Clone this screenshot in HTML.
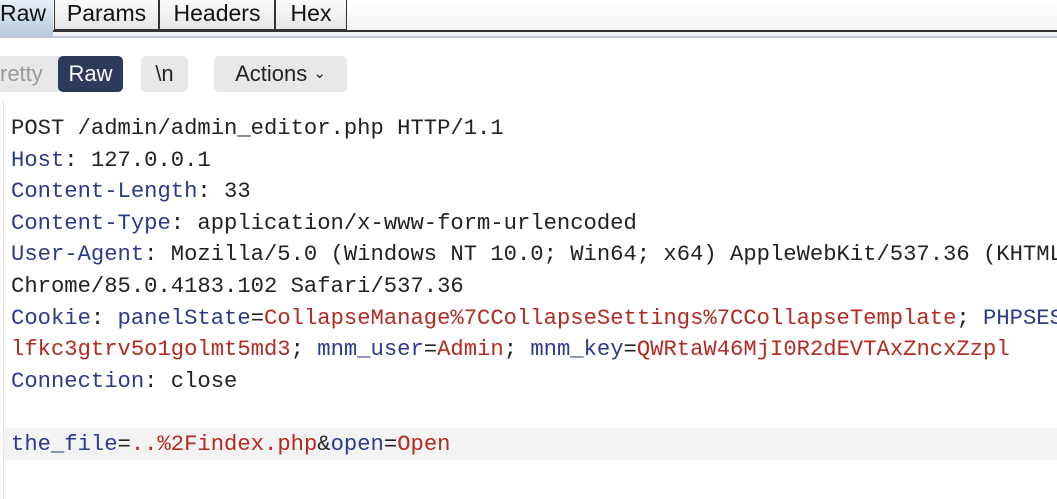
<!DOCTYPE html>
<html><head><meta charset="utf-8"><style>
body{margin:0;width:1057px;height:499px;background:#fff;overflow:hidden;position:relative;font-family:"Liberation Sans",sans-serif}
.tabbar{position:absolute;left:0;top:0;width:1057px;height:37px;background:linear-gradient(#fff,#f2f2f2)}
.tabline{position:absolute;left:0;top:30px;width:1057px;height:2px;background:#333}
.tabline2{position:absolute;left:0;top:36px;width:1057px;height:2px;background:#bcc7d3}
.tab{position:absolute;top:0;height:30px;border:1px solid #333;border-top:none;background:linear-gradient(#fbfbfb,#e6e6e6);font-size:23px;line-height:26px;color:#111;text-align:center;box-sizing:border-box}
.tab.sel{background:linear-gradient(#e6eef6,#b8cbe0);border:none;height:36px}
.btn{position:absolute;top:56px;height:36px;line-height:36px;font-size:22px;border-radius:5px;background:#e8e8e8;color:#222;text-align:center}
.code{position:absolute;left:11px;top:113px;font-family:"Liberation Mono",monospace;font-size:22.2px;line-height:31.6px;white-space:pre;color:#222}
.k{color:#2b3a8a}.v{color:#b22a20}
.hl{position:absolute;left:4px;top:428px;width:1053px;height:32px;background:#f3f3f3}
.lb{position:absolute;left:3px;top:100px;width:1px;height:399px;background:#e2e2e2}
</style></head><body>
<div class="tabbar"></div>
<div class="tabline"></div>
<div class="tabline2"></div>
<div class="tab sel" style="left:0;width:53px;text-align:left">Raw</div>
<div class="tab" style="left:54px;width:105px">Params</div>
<div class="tab" style="left:159px;width:116px">Headers</div>
<div class="tab" style="left:275px;width:72px">Hex</div>
<div class="btn" style="left:0;width:60px;border-radius:0;color:#999;text-align:left">retty</div>
<div class="btn" style="left:58px;width:65px;background:#2e3a5c;color:#fff">Raw</div>
<div class="btn" style="left:141px;width:47px">\n</div>
<div class="btn" style="left:214px;width:133px">Actions <span style="font-size:15px;position:relative;top:-3px">&#8964;</span></div>
<div class="lb"></div>
<div class="hl"></div>
<div class="code">POST /admin/admin_editor.php HTTP/1.1
<span class="k">Host</span>: 127.0.0.1
<span class="k">Content-Length</span>: 33
<span class="k">Content-Type</span>: application/x-www-form-urlencoded
<span class="k">User-Agent</span>: Mozilla/5.0 (Windows NT 10.0; Win64; x64) AppleWebKit/537.36 (KHTML
Chrome/85.0.4183.102 Safari/537.36
<span class="k">Cookie</span>: <span class="k">panelState</span>=<span class="v">CollapseManage%7CCollapseSettings%7CCollapseTemplate</span>; <span class="k">PHPSESS</span>
<span class="v">lfkc3gtrv5o1golmt5md3</span>; <span class="k">mnm_user</span>=<span class="v">Admin</span>; <span class="k">mnm_key</span>=<span class="v">QWRtaW46MjI0R2dEVTAxZncxZzpl</span>
<span class="k">Connection</span>: close

<span class="k">the_file</span>=<span class="v">..%2Findex.php</span>&amp;<span class="k">open</span>=<span class="v">Open</span></div>
</body></html>
